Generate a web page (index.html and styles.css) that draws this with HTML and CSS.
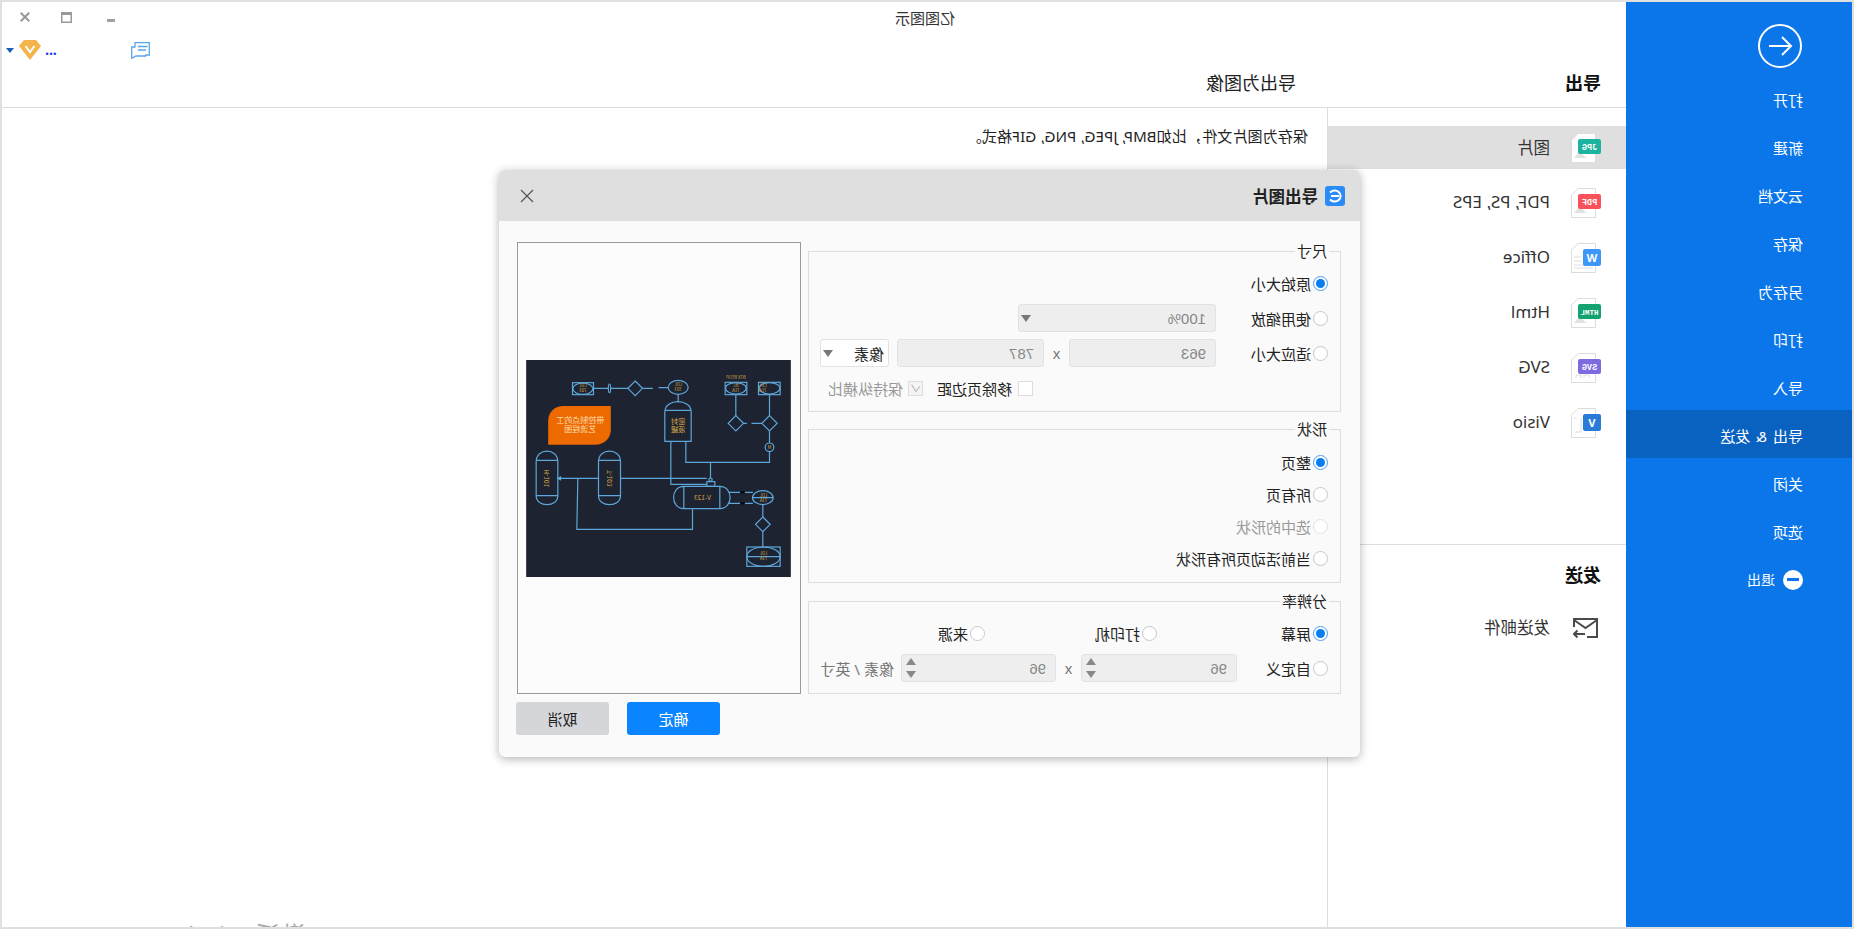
FILE: index.html
```html
<!DOCTYPE html>
<html lang="zh">
<head>
<meta charset="utf-8">
<title>亿图图示</title>
<link rel="stylesheet" href="styles.css">
</head>
<body>
<div class="app">
  <aside class="sidebar">
    <div class="back">
      <svg viewBox="0 0 44 44" width="44" height="44"><circle cx="22" cy="22" r="21" fill="none" stroke="#fff" stroke-width="2"/><path d="M33 22H11M20 13l-9 9 9 9" fill="none" stroke="#fff" stroke-width="2"/></svg>
    </div>
    <nav class="nav">
      <div class="nav-item">打开</div>
      <div class="nav-item">新建</div>
      <div class="nav-item">云文档</div>
      <div class="nav-item">保存</div>
      <div class="nav-item">另存为</div>
      <div class="nav-item">打印</div>
      <div class="nav-item">导入</div>
      <div class="nav-item active">导出 &amp; 发送</div>
      <div class="nav-item">关闭</div>
      <div class="nav-item">选项</div>
      <div class="nav-item exit"><i class="exit-icon"></i><span>退出</span></div>
    </nav>
  </aside>
  <main class="main">
    <div class="titlebar">
      <div class="app-title">亿图图示</div>
      <div class="controls">
        <div class="ctl"><svg viewBox="0 0 8 3" width="8" height="3" class="ctl-min"><rect width="8" height="3" fill="#a0a0a0"/></svg></div>
        <div class="ctl"><svg viewBox="0 0 11 11" width="11" height="11"><rect x=".75" y=".75" width="9.5" height="9.5" fill="none" stroke="#999" stroke-width="1.5"/><rect x="1" y="1" width="9" height="2" fill="#999"/></svg></div>
        <div class="ctl ctl-close"><svg viewBox="0 0 10 10" width="10" height="10"><path d="M.7.7l8.6 8.6M9.3.7L.7 9.3" stroke="#999" stroke-width="2" fill="none"/></svg></div>
      </div>
    </div>
    <div class="toolbar">
      <svg class="chat" viewBox="0 0 19 17" width="19" height="17"><g transform="translate(19 0) scale(-1 1)" fill="none" stroke="#5aa4ef" stroke-width="1.300"><path d="M4 5V.7H18.300V13H15M4.500 5H.7V16.300L5 14H14.500V12.500"/><path d="M7 4.500H16.500M7 8H15"/></g></svg>
      <span class="more">...</span>
      <svg class="vip" viewBox="0 0 22 20" width="22" height="20"><path d="M5 0h12l5 6-11 14L0 6z" fill="#f3b54a"/><path d="M6.500 6l4.500 6 4.500-6" fill="none" stroke="#fff" stroke-width="2"/></svg>
      <i class="vip-caret"></i>
    </div>
    <div class="headers">
      <div class="head-left">导出</div>
      <div class="head-right">导出为图像</div>
    </div>
    <div class="content">
      <div class="col-list">
        <div class="list">
          <div class="item current">
            <svg class="file" viewBox="0 0 30 30" width="30" height="30"><path class="page" d="M5.500.5H23l6.500 6.500v22.500h-24z"/><path class="blob" d="M14 25l8-6 5 6z"/><rect x="0" y="6" width="23" height="15" rx="2" fill="#1cb3a0"/><text class="badge-text" x="11.500" y="16.500">JPG</text></svg>
            <span>图片</span>
          </div>
          <div class="item">
            <svg class="file" viewBox="0 0 30 30" width="30" height="30"><path class="page" d="M5.500.5H23l6.500 6.500v22.500h-24z"/><path class="blob" d="M14 25l8-6 5 6z"/><rect x="0" y="6" width="23" height="15" rx="2" fill="#f9525a"/><text class="badge-text" x="11.500" y="16.500">PDF</text></svg>
            <span class="latin">PDF, PS, EPS</span>
          </div>
          <div class="item">
            <svg class="file" viewBox="0 0 30 30" width="30" height="30"><path class="page" d="M5.500.5H23l6.500 6.500v22.500h-24z"/><path class="lines" d="M20 14h7M20 18h7M8 22h19M8 25h19"/><rect x="0" y="6" width="18" height="17" rx="2" fill="#3d97f7"/><text class="badge-big" x="9" y="18.500">W</text></svg>
            <span class="latin">Office</span>
          </div>
          <div class="item">
            <svg class="file" viewBox="0 0 30 30" width="30" height="30"><path class="page" d="M5.500.5H23l6.500 6.500v22.500h-24z"/><path class="blob" d="M14 25l8-6 5 6z"/><rect x="0" y="6" width="23" height="15" rx="2" fill="#13a36f"/><text class="badge-text narrow" x="11.500" y="16.500">HTML</text></svg>
            <span class="latin">Html</span>
          </div>
          <div class="item">
            <svg class="file" viewBox="0 0 30 30" width="30" height="30"><path class="page" d="M5.500.5H23l6.500 6.500v22.500h-24z"/><path class="lines" d="M12 25v-3h5v3M20 25v-3h5v3"/><rect x="0" y="6" width="23" height="15" rx="2" fill="#7e6be0"/><text class="badge-text" x="11.500" y="16.500">SVG</text></svg>
            <span class="latin">SVG</span>
          </div>
          <div class="item">
            <svg class="file" viewBox="0 0 30 30" width="30" height="30"><path class="page" d="M5.500.5H23l6.500 6.500v22.500h-24z"/><path class="lines" d="M20 10v14h6M24 10h3"/><rect x="0" y="6" width="18" height="17" rx="2" fill="#2a7bd8"/><text class="badge-big" x="9" y="18.500">V</text></svg>
            <span class="latin">Visio</span>
          </div>
        </div>
        <div class="send">
          <div class="send-title">发送</div>
          <div class="item send-item">
            <svg class="mail" viewBox="0 0 25 20" width="25" height="20"><path d="M24 9V1H1v18h10M1 2l11.500 8L24 2M13 16h11M20.500 12.500L24 16l-3.500 3.500" fill="none" stroke="#4a4a4a" stroke-width="2"/></svg>
            <span>发送邮件</span>
          </div>
        </div>
      </div>
      <div class="col-detail">
        <p class="desc">保存为图片文件，比如BMP, JPEG, PNG, GIF格式。</p>
      </div>
    </div>
  </main>

  <section class="dialog">
    <header class="dlg-head">
      <svg class="dlg-logo" viewBox="0 0 20 20" width="20" height="20"><rect width="20" height="20" rx="3" fill="#2b8cf7"/><path d="M15 13.500a6 5.500 0 1 1 0-7" fill="none" stroke="#fff" stroke-width="2"/><path d="M6 10h8" stroke="#fff" stroke-width="2"/></svg>
      <h2 class="dlg-title">导出图片</h2>
      <svg class="dlg-close" viewBox="0 0 14 14" width="14" height="14"><path d="M1 1l12 12M13 1L1 13" stroke="#555" stroke-width="1.200" fill="none"/></svg>
    </header>
    <div class="dlg-body">
      <div class="groups">
        <div class="group">
          <span class="legend">尺寸</span>
          <div class="row"><label class="opt"><i class="radio on"></i>原始大小</label></div>
          <div class="row"><label class="opt lw-112"><i class="radio"></i>使用缩放</label>
            <div class="field w-198"><span>100%</span><i class="caret"></i></div></div>
          <div class="row"><label class="opt lw-112"><i class="radio"></i>适应大小</label>
            <div class="field w-147"><span>963</span></div>
            <span class="times t-25">x</span>
            <div class="field w-147"><span>787</span></div>
            <div class="field select w-69"><span>像素</span><i class="caret"></i></div></div>
          <div class="row checks">
            <label class="chk"><i class="box"></i>移除页边距</label>
            <label class="chk off"><i class="box"><svg viewBox="0 0 15 15" width="13" height="13"><path d="M2.500 5l4.500 6 5-8" fill="none" stroke="#bbb" stroke-width="1.200"/></svg></i>保持纵横比</label>
          </div>
        </div>
        <div class="group shape">
          <span class="legend">形状</span>
          <div class="row r32"><label class="opt"><i class="radio on"></i>整页</label></div>
          <div class="row r32"><label class="opt"><i class="radio"></i>所有页</label></div>
          <div class="row r32"><label class="opt disabled"><i class="radio"></i>选中的形状</label></div>
          <div class="row r32"><label class="opt"><i class="radio"></i>当前活动页所有形状</label></div>
        </div>
        <div class="group res">
          <span class="legend">分辨率</span>
          <div class="row"><label class="opt lw-171"><i class="radio on"></i>屏幕</label>
            <label class="opt lw-172"><i class="radio"></i>打印机</label>
            <label class="opt"><i class="radio"></i>来源</label></div>
          <div class="row"><label class="opt lw-91"><i class="radio"></i>自定义</label>
            <div class="field w-156"><span>96</span><i class="spin"></i></div>
            <span class="times t-25">x</span>
            <div class="field w-155"><span>96</span><i class="spin"></i></div>
            <span class="unit">像素 / 英寸</span></div>
        </div>
      </div>
      <div class="side">
        <div class="preview">
          <svg class="flow" viewBox="48 390 794 651" width="265" height="217">
            <rect x="48" y="390" width="794" height="651" fill="#1d2330"/>
            <g transform="translate(890 0) scale(-1 1)" fill="none" stroke="#5ea6da" stroke-width="3.600">
              <rect x="187" y="458" width="63" height="36"/><ellipse cx="218" cy="476" rx="30" ry="17"/>
              <path d="M250 475H295M302 475H355M397 475H428M445 473H475M504 493V517"/>
              <ellipse cx="298" cy="475" rx="3.500" ry="13"/>
              <path d="M375 453l22 22-22 22-22-22z"/>
              <ellipse cx="504" cy="472" rx="30" ry="21"/>
              <path d="M464 634V545C464 505 543 505 543 545V634zM464 541H543"/>
              <rect x="645" y="457" width="65" height="37"/><ellipse cx="677" cy="475" rx="31" ry="17"/>
              <rect x="745" y="457" width="65" height="37"/><ellipse cx="778" cy="475" rx="31" ry="17"/>
              <path d="M677 494V558M778 494V558M700 580H710M724 580H755M778 603V638M778 665V697H527V634M601 697V745"/>
              <path d="M677 557l23 23-23 23-23-23zM778 557l23 23-23 23-23-23z"/>
              <circle cx="778" cy="652" r="13"/>
              <path d="M482 634V763H590M331 745H590M265 745H143M203 745L200 898H547V838"/>
              <path d="M78 797V695C78 653 143 653 143 695V797C143 833 78 833 78 797zM78 691H143M78 797H143"/>
              <path d="M265 797V695C265 653 331 653 331 695V797C331 833 265 833 265 797zM265 691H331M265 797H331"/>
              <path d="M521 769H629C670 769 670 836 629 836H521C480 836 480 769 521 769zM521 769V836M629 769V836"/>
              <rect x="590" y="755" width="24" height="14"/><circle cx="601" cy="749" r="5"/>
              <ellipse cx="758" cy="803" rx="31" ry="21"/>
              <path d="M727 803H789M656 787H728M656 820H728M758 824V862M758 905V950"/>
              <path d="M758 861l22 22-22 22-22-22z"/>
              <rect x="710" y="951" width="100" height="58"/><ellipse cx="760" cy="980" rx="50" ry="29"/>
              <path d="M710 980H810"/>
              <path d="M143 745l8-4v8z" fill="#5ea6da"/>
              <path d="M690 784h14v6h-14zM690 817h14v6h-14z" fill="#000" stroke="none"/>
              <path d="M114 644V573C114 545 135 528 160 528H302V600C302 625 282 644 255 644z" fill="#ec6a00" stroke="none"/>
            </g>
            <g class="flow-text">
              <text x="386" y="582">密封</text><text x="386" y="607">液罐</text>
              <text x="680" y="580" class="pale">带控制点的工</text><text x="680" y="606" class="pale">艺流程图</text>
              <text x="313" y="811" class="small">V-123</text>
              <text x="132" y="472" class="tiny">LDL</text><text x="132" y="486" class="tiny">71A</text>
              <text x="386" y="468" class="tiny">LDL</text><text x="386" y="484" class="tiny">703</text>
              <text x="672" y="472" class="tiny">LDL</text><text x="672" y="486" class="tiny">703</text>
              <text x="213" y="470" class="tiny">BL</text><text x="213" y="486" class="tiny">71A</text>
              <text x="130" y="800" class="tiny">LDL</text><text x="130" y="816" class="tiny">71A</text>
              <text x="130" y="974" class="tiny">LDL</text><text x="130" y="990" class="tiny">71A</text>
              <text x="213" y="448" class="tiny">BTX BTOP</text>
              <text x="112" y="657" class="tiny">M</text>
              <text x="780" y="745" class="small" dy="7" transform="rotate(90 780 745)">H-101</text>
              <text x="592" y="745" class="small" dy="7" transform="rotate(90 592 745)">T-103</text>
            </g>
          </svg>
        </div>
        <div class="actions">
          <button class="btn ok">确定</button>
          <button class="btn cancel">取消</button>
        </div>
      </div>
    </div>
  </section>

  <div class="watermark">激活 Windows</div>
</div>
</body>
</html>
```

FILE: styles.css
```css
* { box-sizing: border-box; }
html, body { margin: 0; padding: 0; height: 100%; overflow: hidden; background: #fff; }
body { font-family: "Noto Sans", "Noto Sans CJK SC", sans-serif; color: #222; }

.app {
  position: relative;
  display: flex;
  width: 1854px;
  height: 929px;
  border: 2px solid #e0e0e0;
  overflow: hidden;
  background: #fff;
  transform: scaleX(-1);
}

/* sidebar */
.sidebar { flex: 0 0 226px; background: #0a76e9; color: #fff; font-size: 15px; }
.back { padding: 22px 0 6px 50px; height: 72px; }
.back svg { display: block; }
.nav-item { height: 48px; padding: 4px 0 0 49px; line-height: 44px; white-space: nowrap; }
.nav-item.active { background: #0a62c0; word-spacing: 2px; }
.exit { display: flex; align-items: center; gap: 8px; }
.exit span { font-size: 14px; }
.exit-icon { position: relative; width: 20px; height: 20px; border-radius: 50%; background: #fff; display: block; }
.exit-icon::after { content: ""; position: absolute; left: 4px; right: 4px; top: 8px; height: 3px; background: #0a76e9; }

/* main */
.main { flex: 1; display: flex; flex-direction: column; min-width: 0; }
.titlebar { display: flex; align-items: center; height: 30px; padding-right: 3px; }
.app-title { margin-left: 671px; font-size: 15px; color: #333; }
.controls { display: flex; margin-left: auto; align-items: center; }
.ctl { width: 44px; display: flex; justify-content: center; align-items: center; }
.ctl-close { width: 40px; }
.ctl-min { margin-top: 6px; }
.toolbar { display: flex; align-items: center; height: 28px; padding: 8px 4px 0 0; justify-content: flex-end; }
.chat { margin-right: 74px; display: block; }
.more { color: #1a3fe8; font-size: 14px; line-height: 14px; font-weight: 700; margin-right: 4px; }
.vip { display: block; }
.vip-caret { width: 0; height: 0; margin: 0 0 0 5px; border: 4px solid transparent; border-top: 5px solid #1b5fb8; border-bottom: 0; }

.headers { display: flex; align-items: center; height: 48px; padding-bottom: 4px; border-bottom: 1px solid #ddd; }
.head-left { width: 299px; padding-left: 25px; font-size: 18px; font-weight: 700; color: #111; }
.head-right { padding-left: 31px; font-size: 18px; color: #222; }

.content { flex: 1; display: flex; min-height: 0; }
.col-list { flex: 0 0 299px; border-right: 1px solid #ddd; }
.list { padding-top: 18px; height: 436px; }
.item { display: flex; align-items: center; gap: 21px; height: 43px; margin-bottom: 12px; padding-left: 25px; font-size: 16.500px; color: #333; }
.item span { padding-bottom: 2px; }
.item .latin { font-size: 17px; }
.item.current { background: #dfdfdf; }
.file { display: block; flex: none; overflow: visible; }
.page { fill: #fff; stroke: #dcdcdc; stroke-width: 1; }
.lines { fill: none; stroke: #dcdcdc; stroke-width: 1; }
.blob { fill: #e2e2e2; }
.badge-text { font: 700 8.500px "Liberation Mono", monospace; fill: #fff; text-anchor: middle; }
.badge-text.narrow { font-size: 7.500px; }
.badge-big { font: 700 11px "Noto Sans", sans-serif; fill: #fff; text-anchor: middle; }

.send { border-top: 1px solid #ddd; padding-top: 18px; }
.send-title { height: 24px; line-height: 24px; padding-left: 25px; font-size: 18px; font-weight: 700; color: #111; }
.send-item { margin-top: 19px; padding-left: 28px; gap: 23px; }
.mail { display: block; flex: none; }

.col-detail { flex: 1; padding: 18px 0 0 19px; }
.desc { margin: 0; font-size: 15px; line-height: 20px; color: #222; letter-spacing: .14px; }

/* dialog */
.dialog {
  position: absolute;
  left: 492px;
  top: 168px;
  width: 861px;
  height: 587px;
  background: #fafafa;
  border-radius: 6px;
  box-shadow: 0 2px 10px rgba(0, 0, 0, .3);
  overflow: hidden;
  display: flex;
  flex-direction: column;
}
.dlg-head { display: flex; align-items: center; height: 51px; flex: none; background: #dfdfdf; padding: 0 21px 0 15px; }
.dlg-logo { display: block; }
.dlg-title { margin: 0 0 0 7px; font-size: 16.500px; font-weight: 700; color: #222; }
.dlg-close { margin-left: auto; display: block; }
.dlg-body { display: flex; gap: 7px; padding: 21px 0 0 19px; }
.groups { width: 533px; padding-top: 9px; display: flex; flex-direction: column; gap: 17px; }
.group { position: relative; border: 1px solid #ddd; padding: 17px 0 9px 12px; display: flex; flex-direction: column; gap: 7px; }
.shape { padding-top: 16px; padding-bottom: 8px; gap: 0; }
.res { margin-top: 1px; padding-bottom: 11px; }
.legend { position: absolute; left: 11px; top: -11px; padding: 0 2px; background: #fafafa; font-size: 15px; line-height: 20px; color: #222; }
.row { display: flex; align-items: center; height: 28px; font-size: 15px; color: #222; }
.r32 { height: 32px; }
.checks { padding-left: 295px; }
.opt { display: flex; align-items: center; gap: 2px; white-space: nowrap; flex: none; }
.lw-112 { width: 112px; }
.lw-171 { width: 171px; }
.lw-172 { width: 172px; }
.lw-91 { width: 91px; }
.disabled { color: #999; }
.radio { display: block; width: 15px; height: 15px; border-radius: 50%; border: 1px solid #c8c8c8; background: #fff; flex: none; position: relative; }
.disabled .radio { border-color: #e0e0e0; }
.radio.on { border-color: #4a9cf0; }
.radio.on::after { content: ""; position: absolute; left: 2px; top: 2px; width: 9px; height: 9px; border-radius: 50%; background: #0a7df0; }

.field { display: flex; align-items: center; justify-content: space-between; height: 28px; padding: 0 2px 0 9px; border: 1px solid #e2e2e2; border-radius: 3px; background: #eee; color: #888; font-family: "Liberation Sans", sans-serif; flex: none; }
.select { margin-left: 8px; background: #fff; color: #222; padding-left: 4px; font-family: "Noto Sans CJK SC", sans-serif; }
.w-198 { width: 198px; }
.w-147 { width: 147px; }
.w-156 { width: 156px; }
.w-155 { width: 155px; }
.w-69 { width: 69px; }
.caret { width: 0; height: 0; border: 5.500px solid transparent; border-top: 7px solid #777; border-bottom: 0; }
.spin { position: relative; width: 10px; height: 20px; margin-right: 2px; }
.spin::before, .spin::after { content: ""; position: absolute; left: 0; width: 0; height: 0; border: 5px solid transparent; }
.spin::before { top: 0; border-bottom: 7px solid #888; border-top: 0; }
.spin::after { bottom: 0; border-top: 7px solid #888; border-bottom: 0; }
.times { text-align: center; color: #777; font-family: "Liberation Sans", sans-serif; flex: none; }
.t-25 { width: 25px; }
.unit { margin-left: 7px; color: #777; white-space: nowrap; font-size: 15px; }

.chk { display: flex; align-items: center; gap: 6px; white-space: nowrap; flex: none; }
.chk.off { margin-left: 14px; gap: 5px; color: #999; }
.box { display: flex; align-items: center; justify-content: center; width: 15px; height: 15px; background: #fff; border: 1px solid #ddd; flex: none; }
.off .box { background: #f4f4f4; }

.side { width: 285px; }
.preview { display: flex; align-items: center; justify-content: center; width: 284px; height: 452px; border: 1px solid #999; background: #fcfcfc; }
.flow { display: block; }
.flow-text text { font-family: "Noto Sans CJK SC", sans-serif; font-size: 22px; fill: #d9a74a; text-anchor: middle; }
.flow-text .pale { fill: #ffdcb0; font-size: 24px; }
.flow-text .small { font-size: 20px; }
.flow-text .tiny { font-size: 13px; }
.actions { display: flex; justify-content: flex-end; gap: 18px; margin-top: 8px; }
.btn { width: 93px; height: 33px; border: 0; border-radius: 3px; padding: 0; font: 15px "Noto Sans CJK SC", sans-serif; }
.ok { background: #0a84ff; color: #fff; }
.cancel { background: #d5d6da; color: #222; }

.watermark { position: absolute; left: 1547px; top: 918px; font-size: 25px; line-height: 30px; color: #aaa; white-space: nowrap; }
```
